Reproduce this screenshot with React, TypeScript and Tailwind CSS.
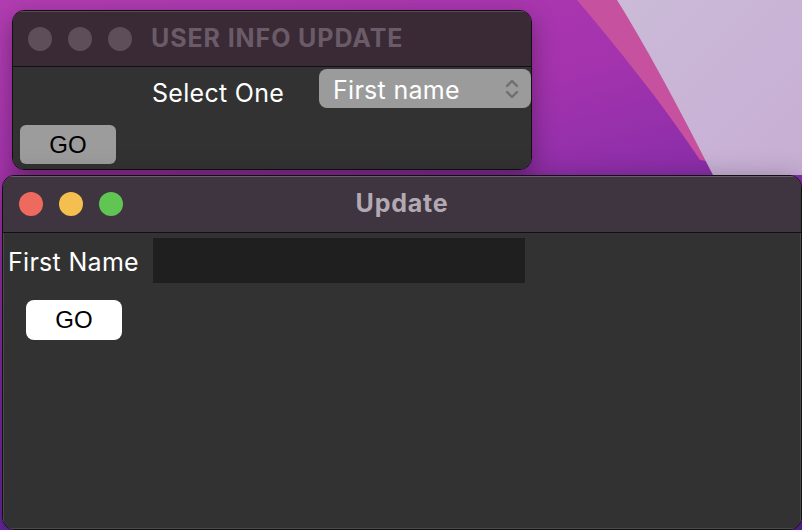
import React from "react";

function Wallpaper() {
  return (
    <svg className="absolute inset-0" width="802" height="530" viewBox="0 0 802 530">
      <defs>
        <linearGradient id="base" x1="0" y1="0" x2="0.4" y2="1">
          <stop offset="0" stopColor="#b23db2" />
          <stop offset="0.35" stopColor="#a533ae" />
          <stop offset="1" stopColor="#5a24a0" />
        </linearGradient>
        <linearGradient id="light" x1="0" y1="0" x2="1" y2="1">
          <stop offset="0" stopColor="#cbbad8" />
          <stop offset="1" stopColor="#c7aed4" />
        </linearGradient>
      </defs>
      <rect width="802" height="530" fill="url(#base)" />
      <path d="M577 0 C 615 45, 660 100, 700 160 L 802 175 L 802 0 Z" fill="#c5519f" />
      <path d="M617 0 C 645 45, 675 100, 713 175 L 802 175 L 802 0 Z" fill="url(#light)" />
    </svg>
  );
}

function Lights({ active }: { active: boolean }) {
  const colors = active
    ? ["bg-[#ee6a5f]", "bg-[#f5bf4f]", "bg-[#61c554]"]
    : ["bg-[#5d4e5a]", "bg-[#5d4e5a]", "bg-[#5d4e5a]"];
  return (
    <div className="flex gap-4">
      {colors.map((c, i) => (
        <span key={i} className={`block w-6 h-6 rounded-full ${c}`} />
      ))}
    </div>
  );
}

export default function App() {
  return (
    <div className="relative w-[802px] h-[530px] overflow-hidden font-['Inter',sans-serif]">
      <Wallpaper />

      {/* USER INFO UPDATE window (inactive) */}
      <div className="absolute left-[12px] top-[10px] w-[520px] h-[160px] rounded-[12px] border border-[#111] overflow-hidden shadow-[0_8px_24px_rgba(0,0,0,0.35)] flex flex-col">
        <div className="h-[56px] shrink-0 bg-[#392a35] border-b border-[#111] flex items-center pl-[15px] shadow-[inset_0_1px_0_#5a4c57]">
          <Lights active={false} />
          <span className="ml-[19px] text-[25px] font-bold text-[#6b5b68] tracking-[0.9px]">USER INFO UPDATE</span>
        </div>
        <div className="flex-1 bg-[#323232] flex flex-col">
          <div className="flex items-center h-[42px] pt-[1px]">
            <span className="ml-[139px] w-[167px] text-[25px] tracking-[0.3px] text-white pt-[10px]">Select One</span>
            <div className="w-[212px] h-[39px] rounded-[8px] bg-[#9b9b9b] flex items-center justify-between pl-[14px] pr-[12px]">
              <span className="text-[25px] tracking-[0.3px] text-white pt-[4px]">First name</span>
              <svg width="14" height="22" viewBox="0 0 14 22" fill="none" stroke="#6f6f6f" strokeWidth="2.4" strokeLinecap="round" strokeLinejoin="round">
                <path d="M2 8 L7 3 L12 8" />
                <path d="M2 14 L7 19 L12 14" />
              </svg>
            </div>
          </div>
          <div className="mt-[16px] ml-[7px] w-[96px] h-[39px] rounded-[6px] bg-[#9c9c9c] flex items-center justify-center">
            <span className="text-[24px] text-black font-['Liberation_Sans',sans-serif]">GO</span>
          </div>
        </div>
      </div>

      {/* Update window (active) */}
      <div className="absolute left-[2px] top-[175px] w-[800px] h-[355px] rounded-[12px] border border-[#111] overflow-hidden shadow-[0_8px_30px_rgba(0,0,0,0.4)] flex flex-col">
        <div className="relative h-[57px] shrink-0 bg-[#3e3540] border-b border-[#111] flex items-center pl-[16px] shadow-[inset_0_1px_0_#6a6068]">
          <Lights active={true} />
          <span className="absolute inset-x-0 text-center text-[25px] font-bold tracking-[0.8px] text-[#b3a9b3]">Update</span>
        </div>
        <div className="flex-1 bg-[#323232] shadow-[inset_1px_0_0_#4a4a4a,inset_-1px_0_0_#4a4a4a,inset_0_-1px_0_#4a4a4a]">
          <div className="flex items-center mt-[5px]">
            <span className="ml-[5px] w-[145px] text-[25px] tracking-[0.3px] text-white pt-[5px]">First Name</span>
            <div className="w-[372px] h-[45px] bg-[#1f1f1f]" />
          </div>
          <div className="mt-[17px] ml-[23px] w-[96px] h-[40px] rounded-[8px] bg-white flex items-center justify-center">
            <span className="text-[24px] text-black font-['Liberation_Sans',sans-serif]">GO</span>
          </div>
        </div>
      </div>
    </div>
  );
}
